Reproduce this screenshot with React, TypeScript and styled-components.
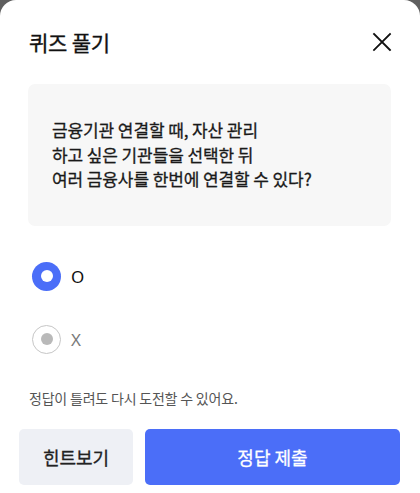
import { useState } from "react"
import styled, { createGlobalStyle } from "styled-components"

const GlobalStyle = createGlobalStyle`
    html, body {
        margin: 0;
        padding: 0;
        background: #5f5f5f;
    }
    * {
        box-sizing: border-box;
    }
    body {
        font-family: "Noto Sans CJK KR", "Noto Sans", sans-serif;
    }
`

const options = [
    { id: "o", label: "O" },
    { id: "x", label: "X" },
]

export default function App() {
    const [selected, setSelected] = useState("o")

    return (
        <>
            <GlobalStyle />
            <Dialog>
                <Header>
                    <h2 className="title">퀴즈 풀기</h2>
                    <CloseButton aria-label="닫기">
                        <svg width="20" height="20" viewBox="0 0 20 20" fill="none">
                            <path d="M2 2L18 18M18 2L2 18" stroke="#111" strokeWidth="1.8" strokeLinecap="square" />
                        </svg>
                    </CloseButton>
                </Header>

                <Body>
                    <QuestionBox>
                        금융기관 연결할 때, 자산 관리
                        <br />
                        하고 싶은 기관들을 선택한 뒤
                        <br />
                        여러 금융사를 한번에 연결할 수 있다?
                    </QuestionBox>

                    <OptionList>
                        {options.map((opt) => (
                            <OptionRow key={opt.id} onClick={() => setSelected(opt.id)}>
                                <Radio $checked={selected === opt.id} />
                                <OptionLabel $checked={selected === opt.id}>{opt.label}</OptionLabel>
                            </OptionRow>
                        ))}
                    </OptionList>

                    <Notice>정답이 틀려도 다시 도전할 수 있어요.</Notice>
                </Body>

                <Footer>
                    <HintButton>힌트보기</HintButton>
                    <SubmitButton>정답 제출</SubmitButton>
                </Footer>
            </Dialog>
        </>
    )
}

const Dialog = styled.div`
    width: 420px;
    height: 493px;
    background: #fff;
    border-radius: 16px 16px 0 0;
    display: flex;
    flex-direction: column;
    overflow: hidden;
`

const Header = styled.header`
    height: 84px;
    display: flex;
    align-items: center;
    justify-content: space-between;
    padding: 0 27px 0 29px;

    .title {
        margin: 0;
        font-size: 21px;
        font-weight: 400;
        color: #111;
        letter-spacing: -0.2px;
        -webkit-text-stroke: 0.35px #111;
    }
`

const CloseButton = styled.button`
    border: none;
    background: none;
    padding: 0;
    width: 22px;
    height: 22px;
    display: flex;
    align-items: center;
    justify-content: center;
    cursor: pointer;
`

const Body = styled.section`
    padding: 0 29px 0 28px;
    display: flex;
    flex-direction: column;
`

const QuestionBox = styled.div`
    height: 142px;
    background: #f7f7f7;
    border-radius: 7px;
    padding: 0 24px;
    display: flex;
    flex-direction: column;
    justify-content: center;
    font-size: 17px;
    line-height: 24.5px;
    font-weight: 400;
    color: #1a1a1a;
    letter-spacing: -0.1px;
    -webkit-text-stroke: 0.3px #1a1a1a;
`

const OptionList = styled.div`
    margin-top: 26px;
    display: flex;
    flex-direction: column;
    gap: 15px;
`

const OptionRow = styled.label`
    height: 48px;
    display: flex;
    align-items: center;
    gap: 10px;
    padding-left: 4px;
    cursor: pointer;
`

const Radio = styled.span<{ $checked: boolean }>`
    width: 29px;
    height: 29px;
    border-radius: 50%;
    display: flex;
    align-items: center;
    justify-content: center;
    background: ${(p) => (p.$checked ? "#4b6ef8" : "#fff")};
    border: ${(p) => (p.$checked ? "none" : "1px solid #c6c6c6")};

    &::after {
        content: "";
        width: 12px;
        height: 12px;
        border-radius: 50%;
        background: ${(p) => (p.$checked ? "#fff" : "#b9b9b9")};
    }
`

const OptionLabel = styled.span<{ $checked: boolean }>`
    font-family: "Noto Sans", sans-serif;
    font-size: 17px;
    color: ${(p) => (p.$checked ? "#111" : "#7a7a7a")};
    line-height: 1;
`

const Notice = styled.p`
    margin: 25px 0 0 1px;
    font-size: 14px;
    line-height: 20px;
    color: #555;
    letter-spacing: -0.2px;
`

const Footer = styled.footer`
    margin-top: 21px;
    padding: 0 20px 0 19px;
    display: flex;
    gap: 12px;
`

const BaseButton = styled.button<{ $ink: string }>`
    height: 56px;
    border: none;
    border-radius: 5px;
    font-family: "Noto Sans CJK KR", sans-serif;
    font-size: 18px;
    font-weight: 400;
    color: ${(p) => p.$ink};
    -webkit-text-stroke: 0.3px ${(p) => p.$ink};
    cursor: pointer;
`

const HintButton = styled(BaseButton).attrs({ $ink: "#222" })`
    width: 114px;
    background: #eef0f5;
`

const SubmitButton = styled(BaseButton).attrs({ $ink: "#fff" })`
    flex: 1;
    background: #4b6ef8;
`
